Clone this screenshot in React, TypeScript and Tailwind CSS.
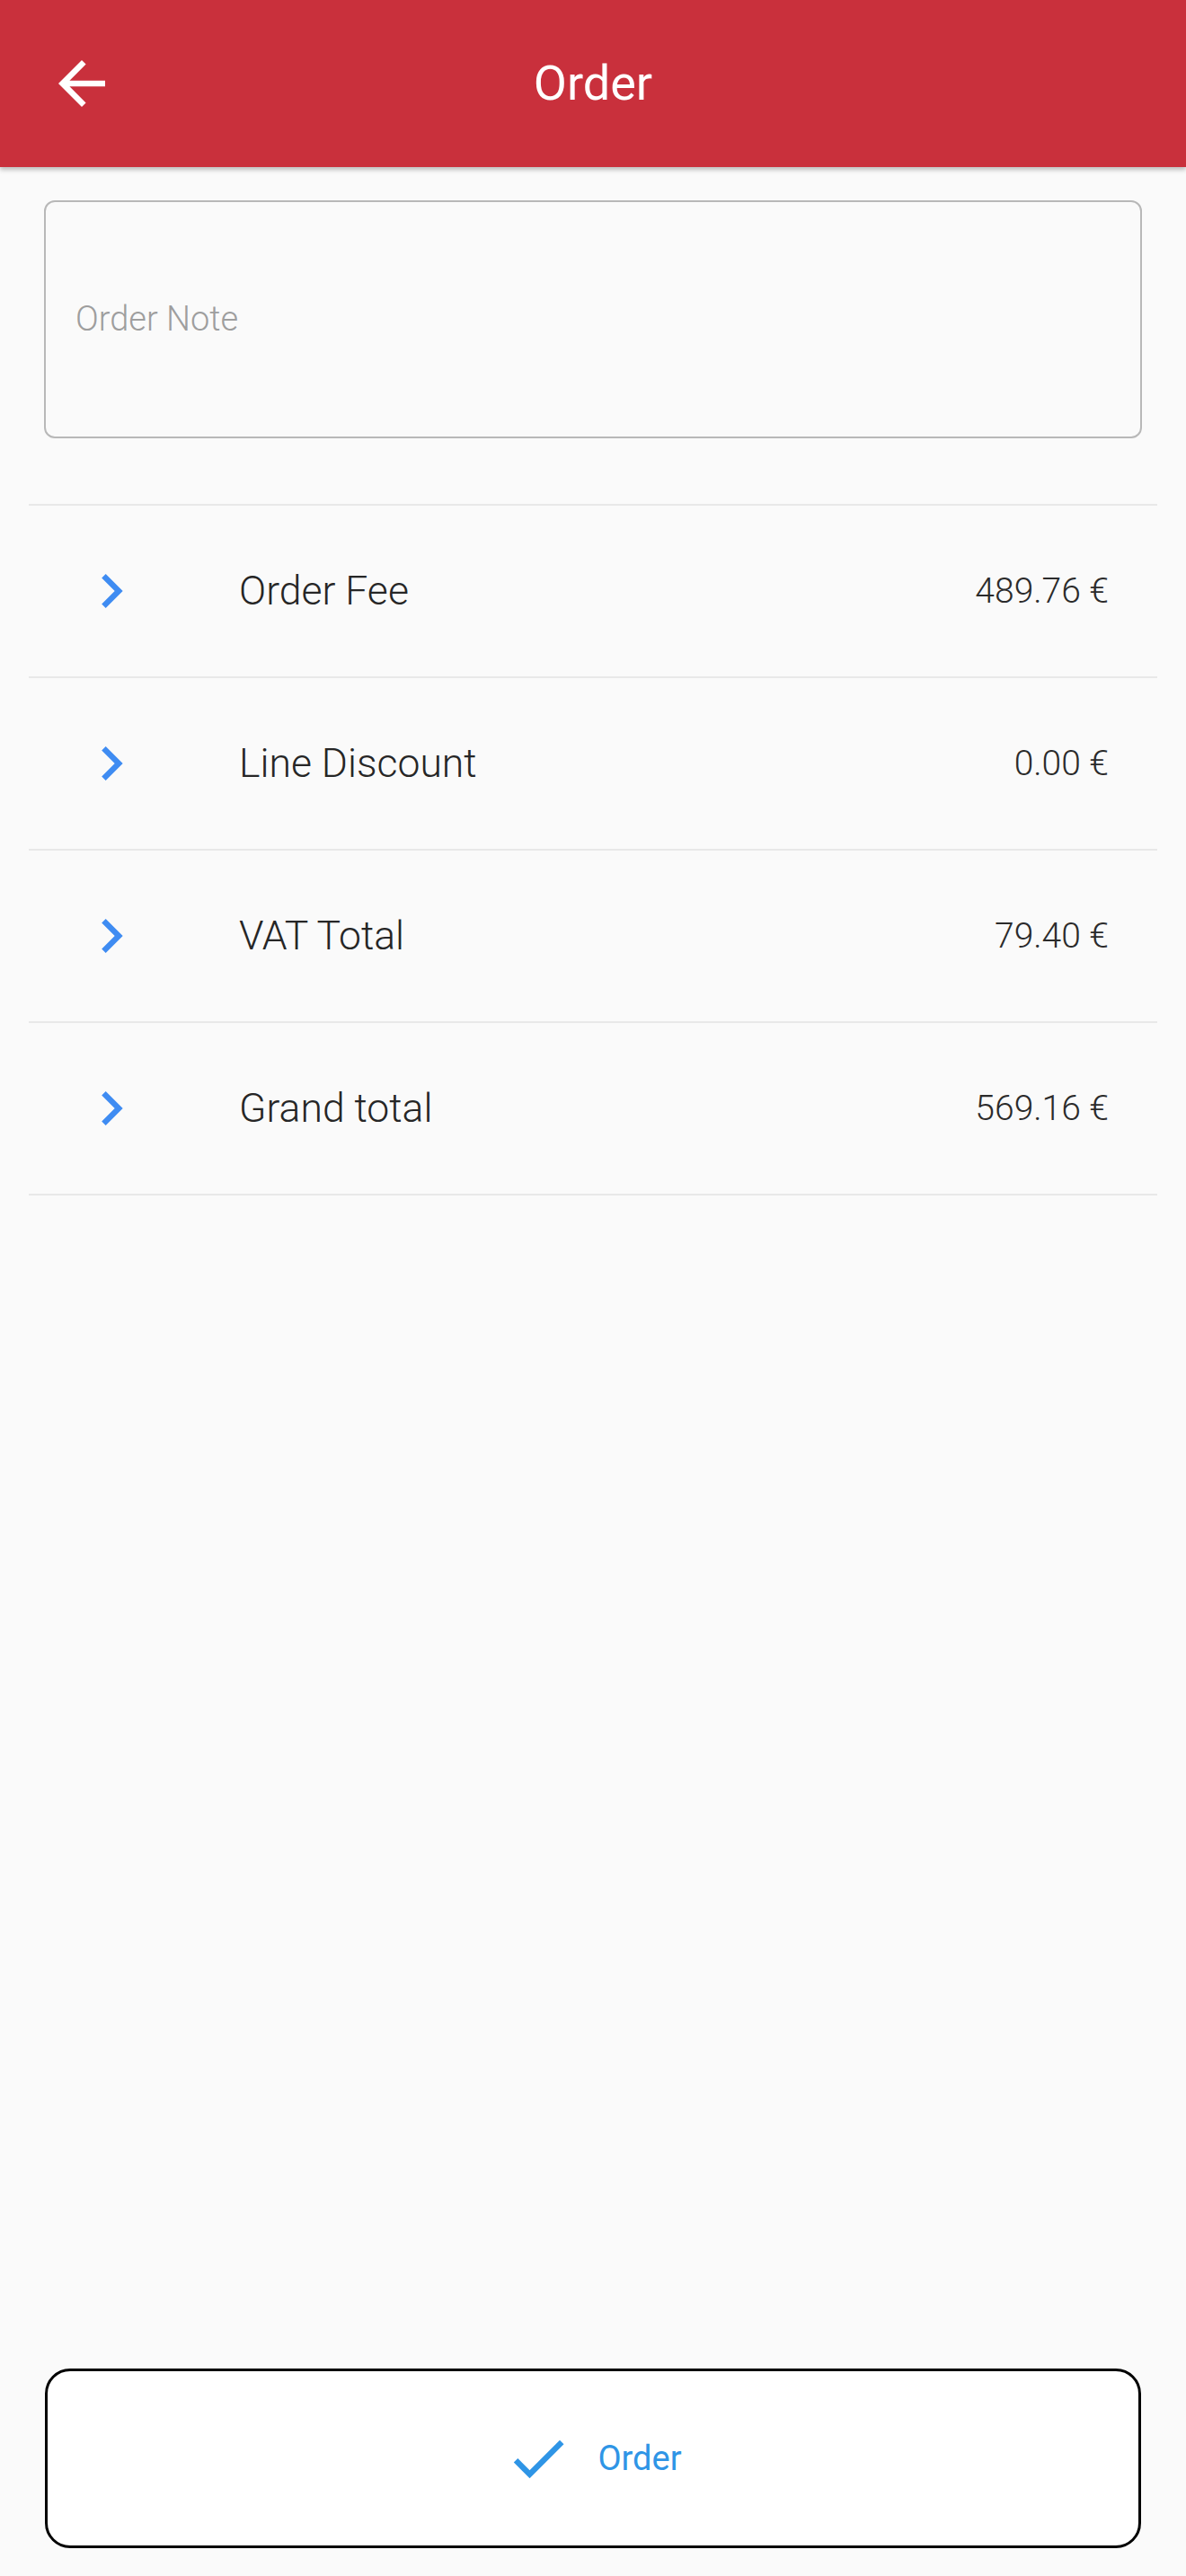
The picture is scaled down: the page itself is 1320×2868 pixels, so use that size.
const rows = [
  { label: 'Order Fee', value: '489.76 €' },
  { label: 'Line Discount', value: '0.00 €' },
  { label: 'VAT Total', value: '79.40 €' },
  { label: 'Grand total', value: '569.16 €' },
];

function ChevronRight() {
  return (
    <svg viewBox="0 0 24 24" className="w-[76px] h-[76px] shrink-0" fill="#3f8cf2">
      <path d="M10 6L8.59 7.41 13.17 12l-4.58 4.59L10 18l6-6z" />
    </svg>
  );
}

export default function App() {
  return (
    <div
      className="min-h-screen flex flex-col bg-[#fafafa]"
      style={{ fontFamily: 'Roboto, "Noto Sans", sans-serif' }}
    >
      {/* App bar */}
      <header className="relative h-[186px] shrink-0 bg-[#c9303c] shadow-[0_3px_5px_rgba(0,0,0,0.25)] flex items-center">
        <button className="ml-[52px] w-[78px] h-[78px]">
          <svg viewBox="0 0 24 24" className="w-[78px] h-[78px]" fill="#ffffff">
            <path d="M20 11H7.83l5.59-5.59L12 4l-8 8 8 8 1.41-1.41L7.83 13H20v-2z" />
          </svg>
        </button>
        <h1 className="absolute left-0 right-0 text-center text-white text-[54px] font-normal leading-none pointer-events-none">
          Order
        </h1>
      </header>

      {/* Note field */}
      <div className="mx-[49px] mt-[37px] h-[265px] rounded-[12px] border-2 border-[#b8b8b8] flex items-center pl-[33px]">
        <span className="text-[38px] font-light text-[#9e9e9e]">Order Note</span>
      </div>

      {/* Totals */}
      <div className="mx-[32px] mt-[73px] border-t-2 border-[#e8e8e8]">
        {rows.map((r) => (
          <div
            key={r.label}
            className="h-[192px] border-b-2 border-[#e8e8e8] flex items-center pl-[54px] pr-[54px]"
          >
            <ChevronRight />
            <span className="ml-[104px] flex-1 text-[44.5px] font-light text-[#262626]">{r.label}</span>
            <span className="text-[39px] font-light text-[#2b2b2b]">{r.value}</span>
          </div>
        ))}
      </div>

      {/* Order button */}
      <div className="mt-auto px-[50px] pb-[31px]">
        <button className="w-full h-[200px] rounded-[28px] border-[3px] border-black bg-white flex items-center justify-center">
          <svg viewBox="0 0 24 24" className="w-[76px] h-[76px]" fill="#2f95e6">
            <path d="M9 16.17L4.83 12l-1.42 1.41L9 19 21 7l-1.41-1.41z" />
          </svg>
          <span className="ml-[28px] text-[38px] text-[#2f95e6]">Order</span>
        </button>
      </div>
    </div>
  );
}
